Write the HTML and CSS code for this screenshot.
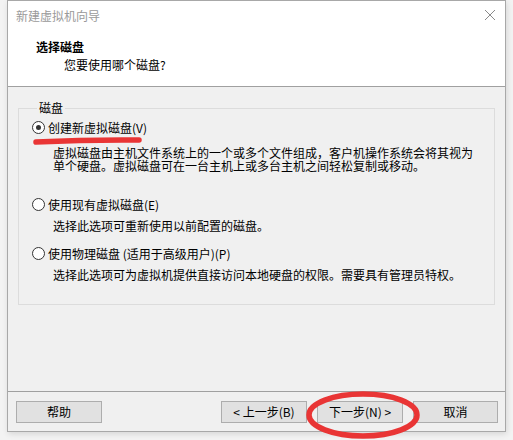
FILE: index.html
```html
<!DOCTYPE html>
<html lang="zh-CN">
<head>
    <meta charset="UTF-8">
    <meta name="viewport" content="width=device-width, initial-scale=1.0">
    <title>新建虚拟机向导</title>
    <link rel="stylesheet" href="styles.css">
</head>
<body>
    <div class="window">
        <div class="titlebar">
            <span class="title">新建虚拟机向导</span>
            <svg class="close" width="12" height="12" viewBox="0 0 12 12">
                <path d="M1 1 L11 11 M11 1 L1 11" stroke="#8a8a8a" stroke-width="1" fill="none"/>
            </svg>
        </div>
        <div class="header">
            <h1>选择磁盘</h1>
            <p>您要使用哪个磁盘?</p>
        </div>
        <div class="content">
            <fieldset class="group">
                <legend>磁盘</legend>
                <div class="option first">
                    <span class="radio checked"></span>
                    <span class="label">创建新虚拟磁盘(V)</span>
                </div>
                <div class="desc two-line">
                    <div>虚拟磁盘由主机文件系统上的一个或多个文件组成，客户机操作系统会将其视为</div>
                    <div>单个硬盘。虚拟磁盘可在一台主机上或多台主机之间轻松复制或移动。</div>
                </div>
                <div class="option second">
                    <span class="radio"></span>
                    <span class="label">使用现有虚拟磁盘(E)</span>
                </div>
                <div class="desc">选择此选项可重新使用以前配置的磁盘。</div>
                <div class="option third">
                    <span class="radio"></span>
                    <span class="label">使用物理磁盘 (适用于高级用户)(P)</span>
                </div>
                <div class="desc">选择此选项可为虚拟机提供直接访问本地硬盘的权限。需要具有管理员特权。</div>
            </fieldset>
        </div>
        <div class="footer">
            <button class="btn help">帮助</button>
            <div class="nav">
                <button class="btn prev">&lt; 上一步(B)</button>
                <button class="btn next">下一步(N) &gt;</button>
                <button class="btn cancel">取消</button>
            </div>
        </div>
    </div>

    <!-- red hand-drawn marks on top of the dialog -->
    <svg class="marks" width="513" height="440" viewBox="0 0 513 440">
        <path d="M36 142 Q88 139.5 139 140" stroke="#e93535" stroke-width="5.5" stroke-linecap="round" fill="none"/>
        <ellipse cx="363" cy="415" rx="54" ry="21" stroke="#e93535" stroke-width="5.5" fill="none"/>
    </svg>
</body>
</html>
```

FILE: styles.css
```css
body {
    margin: 0;
    background-color: #f3f3f3;
    font-family: "Noto Sans CJK SC", "Noto Sans", sans-serif;
    font-size: 12px;
    color: #000;
    width: 513px;
    height: 440px;
    overflow: hidden;
    position: relative;
}
.window {
    margin-left: 7px;
    width: 497px;
    border: 1px solid #a8a8a8;
    background-color: #f0f0f0;
    box-shadow: 1px 2px 6px rgba(0, 0, 0, 0.12);
}
.titlebar {
    height: 30px;
    background-color: white;
    display: flex;
    align-items: center;
    justify-content: space-between;
    padding: 0 9px 0 8px;
}
.title {
    color: #9a9a9a;
    line-height: 16px;
    margin-top: -1px;
}
.close {
    margin-top: -2px;
}
.header {
    height: 56px;
    background-color: white;
    border-bottom: 1px solid #a0a0a0;
    padding-top: 8px;
    box-sizing: border-box;
}
.header h1 {
    margin: 0 0 0 28px;
    font-size: 12px;
    font-weight: bold;
    line-height: 16px;
}
.header p {
    margin: 2px 0 0 56px;
    line-height: 16px;
}
.content {
    height: 304px;
    padding-top: 13px;
    box-sizing: border-box;
}
.group {
    margin: 0 10px;
    padding: 3px 0 23px 13px;
    border: 1px solid #dcdcdc;
}
.group legend {
    padding: 0 2px;
    margin-left: 5px;
    line-height: 16px;
}
.option {
    display: flex;
    align-items: center;
    height: 16px;
}
.option.second {
    margin-top: 24px;
}
.option.third {
    margin-top: 13px;
}
.radio {
    width: 11px;
    height: 11px;
    border: 1px solid #333;
    border-radius: 50%;
    background-color: white;
    margin-right: 3px;
    position: relative;
}
.radio.checked:after {
    content: "";
    position: absolute;
    left: 3px;
    top: 3px;
    width: 5px;
    height: 5px;
    border-radius: 50%;
    background-color: #333;
}
.desc {
    margin: 7px 0 0 21px;
    line-height: 13px;
}
.desc.two-line {
    margin-top: 11px;
}
.footer {
    border-top: 1px solid #a0a0a0;
    padding: 9px 7px 8px 8px;
    display: flex;
    justify-content: space-between;
}
.nav {
    display: flex;
}
.btn {
    height: 22px;
    width: 86px;
    border: 1px solid #adadad;
    background-color: #e1e1e1;
    font-family: "Noto Sans CJK SC", "Noto Sans", sans-serif;
    font-size: 12px;
    color: #000;
    padding: 0;
    line-height: 18px;
}
.btn.next {
    margin-left: 10px;
}
.btn.cancel {
    margin-left: 10px;
    width: 85px;
}
.marks {
    position: absolute;
    left: 0;
    top: 0;
    pointer-events: none;
}
```
